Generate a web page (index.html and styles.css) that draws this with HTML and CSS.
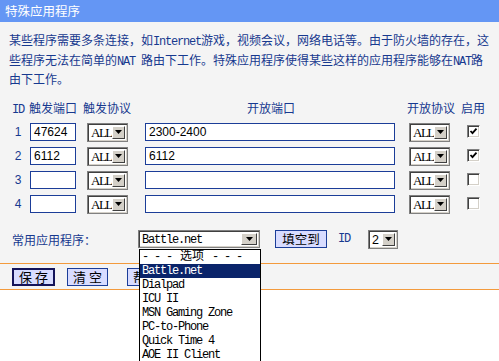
FILE: index.html
```html
<!DOCTYPE html>
<html lang="zh-CN">
<head>
    <meta charset="UTF-8">
    <title>特殊应用程序</title>
    <link rel="stylesheet" href="styles.css">
</head>
<body>
    <div class="title">特殊应用程序</div>

    <div class="content">
        <p class="intro">某些程序需要多条连接，如<span class="en">Internet</span>游戏，视频会议，网络电话等。由于防火墙的存在，这些程序无法在简单的<span class="en">NAT </span>路由下工作。特殊应用程序使得某些这样的应用程序能够在<span class="en">NAT</span>路由下工作。</p>

        <div class="rules">
            <div class="hd c-id"><span class="en">ID</span></div>
            <div class="hd c-tp">触发端口</div>
            <div class="hd c-tproto">触发协议</div>
            <div class="hd c-op">开放端口</div>
            <div class="hd c-oproto">开放协议</div>
            <div class="hd c-en">启用</div>

            <div class="c-id num">1</div>
            <div class="c-tp"><span class="field f-tp">47624</span></div>
            <div class="c-tproto"><span class="sel sel-proto"><span class="sel-val serif">ALL</span><span class="sel-btn"><svg width="7" height="4" viewBox="0 0 7 4"><path d="M0 0h7L3.5 4z"/></svg></span></span></div>
            <div class="c-op"><span class="field f-op">2300-2400</span></div>
            <div class="c-oproto"><span class="sel sel-proto"><span class="sel-val serif">ALL</span><span class="sel-btn"><svg width="7" height="4" viewBox="0 0 7 4"><path d="M0 0h7L3.5 4z"/></svg></span></span></div>
            <div class="c-en"><span class="chk"><svg width="9" height="9" viewBox="0 0 9 9"><path d="M1.5 4l2 2.2 4-4.5" fill="none" stroke="#000" stroke-width="1.8"/></svg></span></div>

            <div class="c-id num">2</div>
            <div class="c-tp"><span class="field f-tp">6112</span></div>
            <div class="c-tproto"><span class="sel sel-proto"><span class="sel-val serif">ALL</span><span class="sel-btn"><svg width="7" height="4" viewBox="0 0 7 4"><path d="M0 0h7L3.5 4z"/></svg></span></span></div>
            <div class="c-op"><span class="field f-op">6112</span></div>
            <div class="c-oproto"><span class="sel sel-proto"><span class="sel-val serif">ALL</span><span class="sel-btn"><svg width="7" height="4" viewBox="0 0 7 4"><path d="M0 0h7L3.5 4z"/></svg></span></span></div>
            <div class="c-en"><span class="chk"><svg width="9" height="9" viewBox="0 0 9 9"><path d="M1.5 4l2 2.2 4-4.5" fill="none" stroke="#000" stroke-width="1.8"/></svg></span></div>

            <div class="c-id num">3</div>
            <div class="c-tp"><span class="field f-tp"></span></div>
            <div class="c-tproto"><span class="sel sel-proto"><span class="sel-val serif">ALL</span><span class="sel-btn"><svg width="7" height="4" viewBox="0 0 7 4"><path d="M0 0h7L3.5 4z"/></svg></span></span></div>
            <div class="c-op"><span class="field f-op"></span></div>
            <div class="c-oproto"><span class="sel sel-proto"><span class="sel-val serif">ALL</span><span class="sel-btn"><svg width="7" height="4" viewBox="0 0 7 4"><path d="M0 0h7L3.5 4z"/></svg></span></span></div>
            <div class="c-en"><span class="chk"></span></div>

            <div class="c-id num">4</div>
            <div class="c-tp"><span class="field f-tp"></span></div>
            <div class="c-tproto"><span class="sel sel-proto"><span class="sel-val serif">ALL</span><span class="sel-btn"><svg width="7" height="4" viewBox="0 0 7 4"><path d="M0 0h7L3.5 4z"/></svg></span></span></div>
            <div class="c-op"><span class="field f-op"></span></div>
            <div class="c-oproto"><span class="sel sel-proto"><span class="sel-val serif">ALL</span><span class="sel-btn"><svg width="7" height="4" viewBox="0 0 7 4"><path d="M0 0h7L3.5 4z"/></svg></span></span></div>
            <div class="c-en"><span class="chk"></span></div>
        </div>

        <div class="preset">
            <span class="preset-label">常用应用程序：</span>
            <span class="sel sel-app">
                <span class="sel-val en">Battle.net</span>
                <span class="sel-btn"><svg width="7" height="4" viewBox="0 0 7 4"><path d="M0 0h7L3.5 4z"/></svg></span>
                <!-- открытый список -->
                <span class="dropdown">
                    <span class="opt">- - - <span class="cjk">选项</span> - - -</span>
                    <span class="opt active">Battle.net</span>
                    <span class="opt">Dialpad</span>
                    <span class="opt">ICU II</span>
                    <span class="opt">MSN Gaming Zone</span>
                    <span class="opt">PC-to-Phone</span>
                    <span class="opt">Quick Time 4</span>
                    <span class="opt">AOE II Client</span>
                </span>
            </span>
            <span class="btn btn-fill">填空到</span>
            <span class="id-label en">ID</span>
            <span class="sel sel-id"><span class="sel-val">2</span><span class="sel-btn"><svg width="7" height="4" viewBox="0 0 7 4"><path d="M0 0h7L3.5 4z"/></svg></span></span>
        </div>
    </div>

    <div class="actions">
        <span class="btn btn-main">保 存</span>
        <span class="btn">清 空</span>
        <span class="btn btn-help">帮 助</span>
    </div>
</body>
</html>
```

FILE: styles.css
```css
html {
    overflow: hidden;
}
body {
    margin: 0;
    min-height: 100vh;
    background: #fff;
    font-family: "Noto Sans CJK SC", "Liberation Sans", sans-serif;
    font-size: 12px;
    color: #17398f;
}
.en {
    font-family: "Liberation Mono", "Noto Sans CJK SC", monospace;
    letter-spacing: -1.2px;
}
.intro .en {
    line-height: 1;
}
.serif {
    font-family: "Liberation Serif", serif;
}
.title {
    height: 22px;
    line-height: 22px;
    padding-left: 5px;
    background: #6496f4;
    color: #fff;
    font-size: 12.5px;
}
.content {
    background: #f4f4f4;
    padding: 8px 8px 14px 8px;
}
.intro {
    margin: 0;
    padding-left: 1px;
    line-height: 19.5px;
}
.rules {
    display: grid;
    grid-template-columns: 20px 57px 58px 264px 56px 30px;
    grid-auto-rows: 24px;
    align-items: center;
    margin-top: 7px;
}
.c-id {
    text-align: center;
}
.num {
    font-family: "Liberation Sans", sans-serif;
}
.hd.c-tp {
    padding-left: 1px;
}
.hd.c-tproto {
    margin-left: -2px;
}
.hd.c-op {
    text-align: center;
    margin-left: -8px;
}
.hd.c-en {
    margin-left: -2px;
}
.c-tp .field,
.c-tproto .sel,
.c-op .field,
.c-oproto .sel {
    margin-left: 2px;
}
.c-en .chk {
    margin-left: 4px;
}
.field {
    display: block;
    box-sizing: border-box;
    height: 18px;
    line-height: 16px;
    border: 1px solid #1b3d98;
    background: #fff;
    padding-left: 3px;
    color: #000;
    font-family: "Liberation Sans", sans-serif;
    font-size: 12px;
}
.f-tp {
    width: 46px;
}
.f-op {
    width: 250px;
}
.sel {
    display: inline-flex;
    box-sizing: border-box;
    border: 1px solid #808080;
    box-shadow: inset 1px 1px #404040, inset -1px -1px #d4d0c8;
    background: #fff;
    padding: 2px;
    color: #000;
    vertical-align: middle;
}
.sel-val {
    flex: 1;
    min-width: 0;
    line-height: 14px;
    padding-left: 1px;
    white-space: nowrap;
}
.sel-btn {
    display: flex;
    flex: none;
    align-items: center;
    justify-content: center;
    width: 13px;
    box-sizing: border-box;
    background: #d4d0c8;
    border: 1px solid;
    border-color: #fff #404040 #404040 #fff;
}
.sel-proto {
    width: 41px;
    height: 19px;
    font-size: 13px;
}
.sel-proto .sel-val {
    letter-spacing: -1.5px;
}
.chk {
    display: flex;
    align-items: center;
    justify-content: center;
    box-sizing: border-box;
    width: 13px;
    height: 13px;
    background: #fff;
    border: 1px solid;
    border-color: #808080 #fff #fff #808080;
    box-shadow: inset 1px 1px #404040, inset -1px -1px #d4d0c8;
}
.preset {
    display: flex;
    align-items: center;
    margin-top: 14px;
    height: 19px;
}
.preset-label {
    width: 126px;
    padding-left: 4px;
}
.sel-app {
    position: relative;
    z-index: 2;
    width: 122px;
    height: 18px;
    font-size: 12px;
}
.sel-app .sel-btn {
    width: 16px;
}
.dropdown {
    position: absolute;
    top: 18px;
    left: 0;
    width: 122px;
    box-sizing: border-box;
    border: 1px solid #000;
    border-bottom: none;
    background: #fff;
    color: #000;
    font-family: "Liberation Mono", "Noto Sans CJK SC", monospace;
    letter-spacing: -1.2px;
    font-size: 12px;
}
.dropdown .cjk {
    letter-spacing: 0;
    margin: 0 2px;
}
.opt {
    display: block;
    height: 14px;
    line-height: 14px;
    padding-left: 2px;
    white-space: nowrap;
}
.opt.active {
    background: #0a246a;
    color: #fff;
}
.btn {
    display: inline-block;
    box-sizing: border-box;
    height: 18px;
    line-height: 16px;
    border: 1px solid #1b3d98;
    background: #d8dcff;
    color: #000;
    font-size: 13px;
    text-align: center;
}
.btn-fill {
    width: 52px;
    margin-left: 15px;
    font-size: 12.5px;
}
.id-label {
    margin-left: 11px;
    margin-right: 18px;
}
.sel-id {
    width: 30px;
    height: 19px;
    font-family: "Liberation Sans", sans-serif;
    font-size: 12.5px;
}
.actions {
    display: flex;
    background: #f4f4f4;
    border-top: 1px solid #f39a3c;
    border-bottom: 1px solid #f39a3c;
    padding: 4px 12px 3px 12px;
    height: 18px;
}
.actions .btn {
    width: 41px;
    margin-right: 14px;
}
.actions .btn-main {
    width: 43px;
    border: 2px solid #14145a;
    line-height: 14px;
    margin-right: 12px;
}
.actions .btn-help {
    margin-left: 5px;
}
```
